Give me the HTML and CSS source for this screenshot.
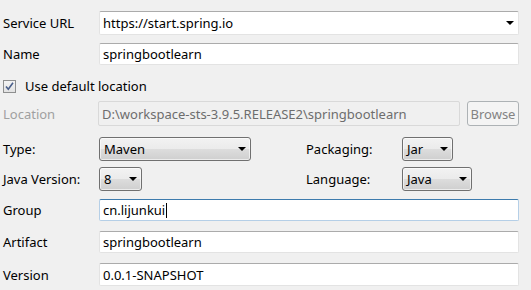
FILE: index.html
```html
<!DOCTYPE html>
<html lang="en">
<head>
  <meta charset="UTF-8" />
  <title>New Spring Starter Project</title>
  <link rel="stylesheet" href="styles.css">
</head>
<body>
  <div class="form">
    <div class="row r-url">
      <label class="lbl">Service URL</label>
      <div class="edit-combo">
        <span class="val">https://start.spring.io</span>
        <span class="arrow"></span>
      </div>
    </div>

    <div class="row r-name">
      <label class="lbl">Name</label>
      <div class="text">springbootlearn</div>
    </div>

    <div class="row r-check">
      <span class="check">
        <svg width="11" height="11" viewBox="0 0 11 11">
          <path d="M2 5.5 L4.3 8.3 L9 1.8" fill="none" stroke="#4a5f8a" stroke-width="1.6"/>
        </svg>
      </span>
      <span class="check-lbl">Use default location</span>
    </div>

    <div class="row r-loc">
      <label class="lbl disabled">Location</label>
      <div class="text off">D:\workspace-sts-3.9.5.RELEASE2\springbootlearn</div>
      <button class="btn" disabled>Browse</button>
    </div>

    <div class="grid">
      <label class="lbl">Type:</label>
      <div class="cell"><div class="combo w-type"><span>Maven</span><span class="arrow"></span></div></div>
      <label class="lbl">Packaging:</label>
      <div class="cell"><div class="combo w-pack"><span>Jar</span><span class="arrow"></span></div></div>

      <label class="lbl">Java Version:</label>
      <div class="cell"><div class="combo w-java"><span>8</span><span class="arrow"></span></div></div>
      <label class="lbl">Language:</label>
      <div class="cell"><div class="combo w-lang"><span>Java</span><span class="arrow"></span></div></div>
    </div>

    <div class="row r-group">
      <label class="lbl">Group</label>
      <div class="text focus">cn.lijunkui<span class="caret"></span></div>
    </div>

    <div class="row r-art">
      <label class="lbl">Artifact</label>
      <div class="text">springbootlearn</div>
    </div>

    <div class="row r-ver">
      <label class="lbl">Version</label>
      <div class="text">0.0.1-SNAPSHOT</div>
    </div>
  </div>
</body>
</html>
```

FILE: styles.css
```css
body {
  margin: 0;
  background: #f0f0f0;
  font-family: "Noto Sans", "Open Sans", sans-serif;
  font-size: 13px;
  color: #000;
}
.form {
  padding: 11px 12px 0 3px;
}
.row {
  display: flex;
  align-items: center;
}
.lbl {
  width: 96px;
  flex: none;
}
.lbl.disabled {
  color: #a0a0a0;
}
.r-url { height: 24px; }
.r-name { height: 22px; margin-top: 8px; }
.r-check { height: 22px; margin-top: 10px; }
.r-loc { height: 25px; margin-top: 4px; }
.r-group { height: 22px; margin-top: 8px; }
.r-art { height: 22px; margin-top: 10px; }
.r-ver { height: 23px; margin-top: 10px; }

.text,
.edit-combo {
  flex: 1;
  height: 100%;
  box-sizing: border-box;
  background: #fff;
  border: 1px solid #e3e3e3;
  border-top-color: #ababab;
  border-radius: 2px;
  padding: 0 3px;
  display: flex;
  align-items: center;
  white-space: nowrap;
}
.edit-combo {
  justify-content: space-between;
}
.edit-combo .arrow {
  margin-right: 1px;
}
.text.off {
  flex: none;
  width: 362px;
  margin-left: -1px;
  background: #f0f0f0;
  border-color: #d9d9d9;
  color: #6d6d6d;
}
.text.focus {
  border-color: #b5cfe7;
  border-top-color: #3d7bad;
}
.caret {
  display: inline-block;
  width: 1px;
  height: 15px;
  background: #000;
  margin-left: 1px;
}
.arrow {
  width: 0;
  height: 0;
  border-left: 4px solid transparent;
  border-right: 4px solid transparent;
  border-top: 4px solid #000;
}

.check {
  width: 11px;
  height: 11px;
  border: 1px solid #8e8f8f;
  background: linear-gradient(#f4f4f4, #e2e2e2);
  display: flex;
}
.check-lbl {
  margin-left: 9px;
}

.btn {
  margin-left: 7px;
  width: 53px;
  height: 25px;
  font: inherit;
  color: #838383;
  background: #f4f4f4;
  border: 1px solid #adb2b5;
  border-radius: 3px;
  padding: 0;
}

.grid {
  display: grid;
  grid-template-columns: 96px 207px 96px 1fr;
  grid-template-rows: 24px 24px;
  row-gap: 6px;
  margin-top: 11px;
  align-items: center;
}
.cell {
  height: 24px;
}
.combo {
  height: 100%;
  box-sizing: border-box;
  border: 1px solid #707070;
  border-radius: 3px;
  background: linear-gradient(#f2f2f2 0%, #ebebeb 50%, #dddddd 50%, #cfcfcf 100%);
  box-shadow: inset 0 0 0 1px rgba(255, 255, 255, 0.6);
  display: flex;
  align-items: center;
  justify-content: space-between;
  padding: 0 4px;
}
.w-type { width: 152px; }
.w-pack { width: 51px; }
.w-java { width: 43px; }
.w-lang { width: 70px; }
```
